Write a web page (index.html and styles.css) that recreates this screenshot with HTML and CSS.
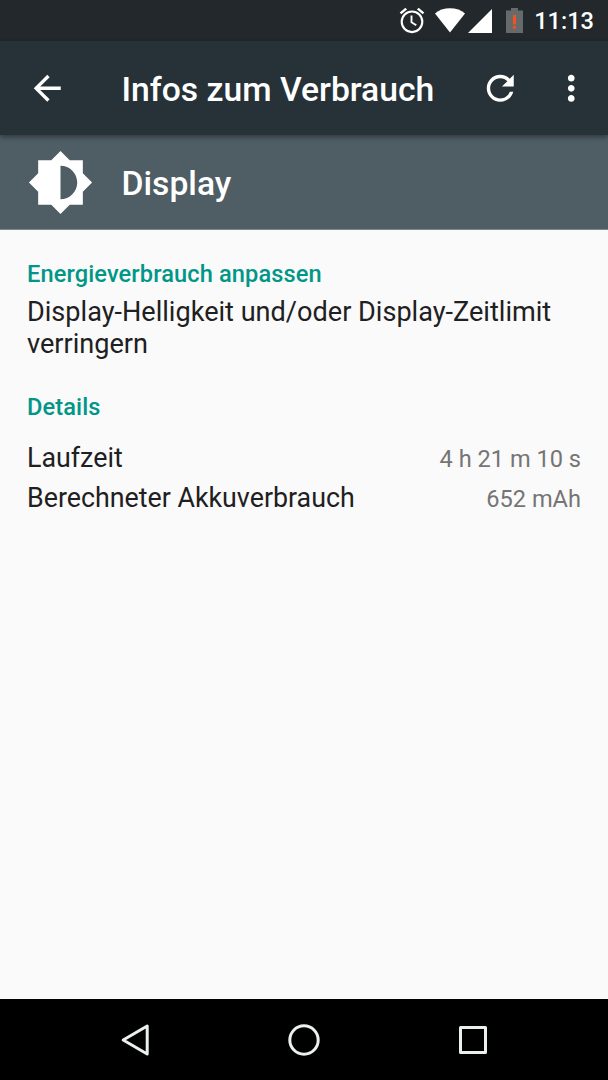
FILE: index.html
```html
<!DOCTYPE html>
<html lang="de">
<head>
    <meta charset="UTF-8">
    <meta name="viewport" content="width=device-width, initial-scale=1.0">
    <title>Infos zum Verbrauch</title>
    <link rel="stylesheet" href="styles.css">
</head>
<body>
    <div class="screen">
        <div class="status-bar">
            <svg class="alarm" width="26" height="27" viewBox="0 0 26 27" fill="none" stroke="#fff">
                <circle cx="13" cy="14.8" r="10.3" stroke-width="2.1"/>
                <path d="M12.5 8.5v6.8l4.8 3" stroke-width="1.9"/>
                <path d="M1.5 6.4L7.2 1.6M24.5 6.4l-5.7-4.8" stroke-width="2.5"/>
            </svg>
            <svg class="wifi" width="30" height="25" viewBox="0 0 30 25">
                <path d="M15 24.5L0 5.5C3.8 2.2 9 .3 15 .3s11.2 1.9 15 5.2z" fill="#fff"/>
            </svg>
            <svg class="signal" width="24" height="24" viewBox="0 0 24 24">
                <path d="M0 24L24 0v24z" fill="#fff"/>
            </svg>
            <svg class="battery" width="17" height="25" viewBox="0 0 17 25">
                <path d="M5 0h7v2.500h5V25H0V2.500h5z" fill="#666a6b"/>
                <path d="M7 7h3v9.500H7zM7 18h3v2.800H7z" fill="#f4511e"/>
            </svg>
            <span class="clock">11:13</span>
        </div>

        <div class="toolbar">
            <svg class="icon" viewBox="0 0 24 24"><path d="M20 11H7.830l5.590-5.590L12 4l-8 8 8 8 1.410-1.410L7.830 13H20v-2z"/></svg>
            <h1 class="title">Infos zum Verbrauch</h1>
            <svg class="icon refresh" viewBox="0 0 24 24"><path d="M17.650 6.350C16.200 4.900 14.210 4 12 4c-4.420 0-7.990 3.580-7.990 8s3.570 8 7.990 8c3.730 0 6.840-2.550 7.730-6h-2.080c-.82 2.330-3.040 4-5.650 4-3.310 0-6-2.690-6-6s2.690-6 6-6c1.660 0 3.140.69 4.220 1.780L13 11h7V4l-2.350 2.350z"/></svg>
            <svg class="icon more" viewBox="0 0 24 24"><path d="M12 8c1.100 0 2-.9 2-2s-.9-2-2-2-2 .9-2 2 .9 2 2 2zm0 2c-1.100 0-2 .9-2 2s.9 2 2 2 2-.9 2-2-.9-2-2-2zm0 6c-1.100 0-2 .9-2 2s.9 2 2 2 2-.9 2-2-.9-2-2-2z"/></svg>
        </div>

        <div class="app-header">
            <svg class="app-icon" viewBox="0 0 24 24"><path d="M20 15.310L23.310 12 20 8.690V4h-4.690L12 .69 8.690 4H4v4.690L.69 12 4 15.310V20h4.690L12 23.310 15.310 20H20v-4.690zM12 18V6c3.310 0 6 2.690 6 6s-2.690 6-6 6z"/></svg>
            <h2 class="title">Display</h2>
        </div>

        <div class="content">
            <h3 class="section-title">Energieverbrauch anpassen</h3>
            <p class="hint">Display-Helligkeit und/oder Display-Zeitlimit verringern</p>
            <h3 class="section-title">Details</h3>
            <div class="details">
                <div class="row">
                    <span class="label">Laufzeit</span>
                    <span class="value">4 h 21 m 10 s</span>
                </div>
                <div class="row">
                    <span class="label">Berechneter Akkuverbrauch</span>
                    <span class="value">652 mAh</span>
                </div>
            </div>
        </div>

        <div class="nav-bar">
            <svg width="32" height="36" viewBox="0 0 32 36"><path d="M4.200 18L28.200 4v28z"/></svg>
            <svg width="36" height="36" viewBox="0 0 36 36"><circle cx="18" cy="18" r="14.200"/></svg>
            <svg width="32" height="36" viewBox="0 0 32 36"><rect x="3.500" y="5.500" width="25" height="25"/></svg>
        </div>
    </div>
</body>
</html>
```

FILE: styles.css
```css
* {
    box-sizing: border-box;
}
body {
    margin: 0;
    font-family: Roboto, sans-serif;
    background-color: #fafafa;
    color: #1e2021;
}
h1, h2, h3, p {
    margin: 0;
}
svg {
    display: block;
    flex: none;
}
.screen {
    width: 608px;
    height: 1080px;
    display: flex;
    flex-direction: column;
    overflow: hidden;
}
.status-bar {
    height: 41px;
    display: flex;
    justify-content: flex-end;
    align-items: center;
    padding-right: 14px;
    background-color: #22282b;
    color: #fff;
}
.wifi {
    margin-left: 10px;
}
.signal {
    margin-left: 3px;
}
.battery {
    margin-left: 14px;
}
.clock {
    margin-left: 11px;
    font-size: 23.6px;
    font-weight: 500;
    line-height: 28px;
}
.toolbar {
    position: relative;
    height: 94px;
    display: flex;
    align-items: center;
    padding: 0 17px 0 27px;
    background-color: #273238;
    box-shadow: 0 2px 5px rgba(0, 0, 0, 0.4);
}
.icon {
    width: 40.5px;
    height: 40.5px;
    fill: #fff;
}
.title {
    padding-top: 3px;
    color: #fff;
    font-size: 33.7px;
    font-weight: 500;
    line-height: 40px;
}
.toolbar .title {
    flex: 1;
    margin-left: 54px;
}
.refresh {
    margin-right: 30px;
}
.app-header {
    height: 95px;
    display: flex;
    align-items: center;
    padding-left: 27px;
    background-color: #4f5d64;
    border-bottom: 1px solid #7f898d;
}
.app-icon {
    width: 67px;
    height: 67px;
    fill: #fff;
}
.app-header .title {
    margin-left: 27.5px;
}
.content {
    flex: 1;
    padding: 30px 27px 0;
    font-size: 27.1px;
    line-height: 32px;
}
.section-title {
    color: #009688;
    font-size: 23.6px;
    font-weight: 500;
    line-height: 28px;
    letter-spacing: 0.12px;
}
.hint {
    margin: 8px 0 33px;
}
.details {
    margin-top: 21px;
}
.row {
    display: flex;
    justify-content: space-between;
    align-items: baseline;
    height: 40px;
}
.label {
    font-size: 26.8px;
}
.value {
    color: #757575;
    font-size: 23.6px;
}
.nav-bar {
    height: 81px;
    display: flex;
    justify-content: center;
    align-items: center;
    gap: 135px;
    background-color: #000;
}
.nav-bar svg {
    fill: none;
    stroke: #eceff0;
    stroke-width: 3px;
    stroke-linejoin: round;
}
```
